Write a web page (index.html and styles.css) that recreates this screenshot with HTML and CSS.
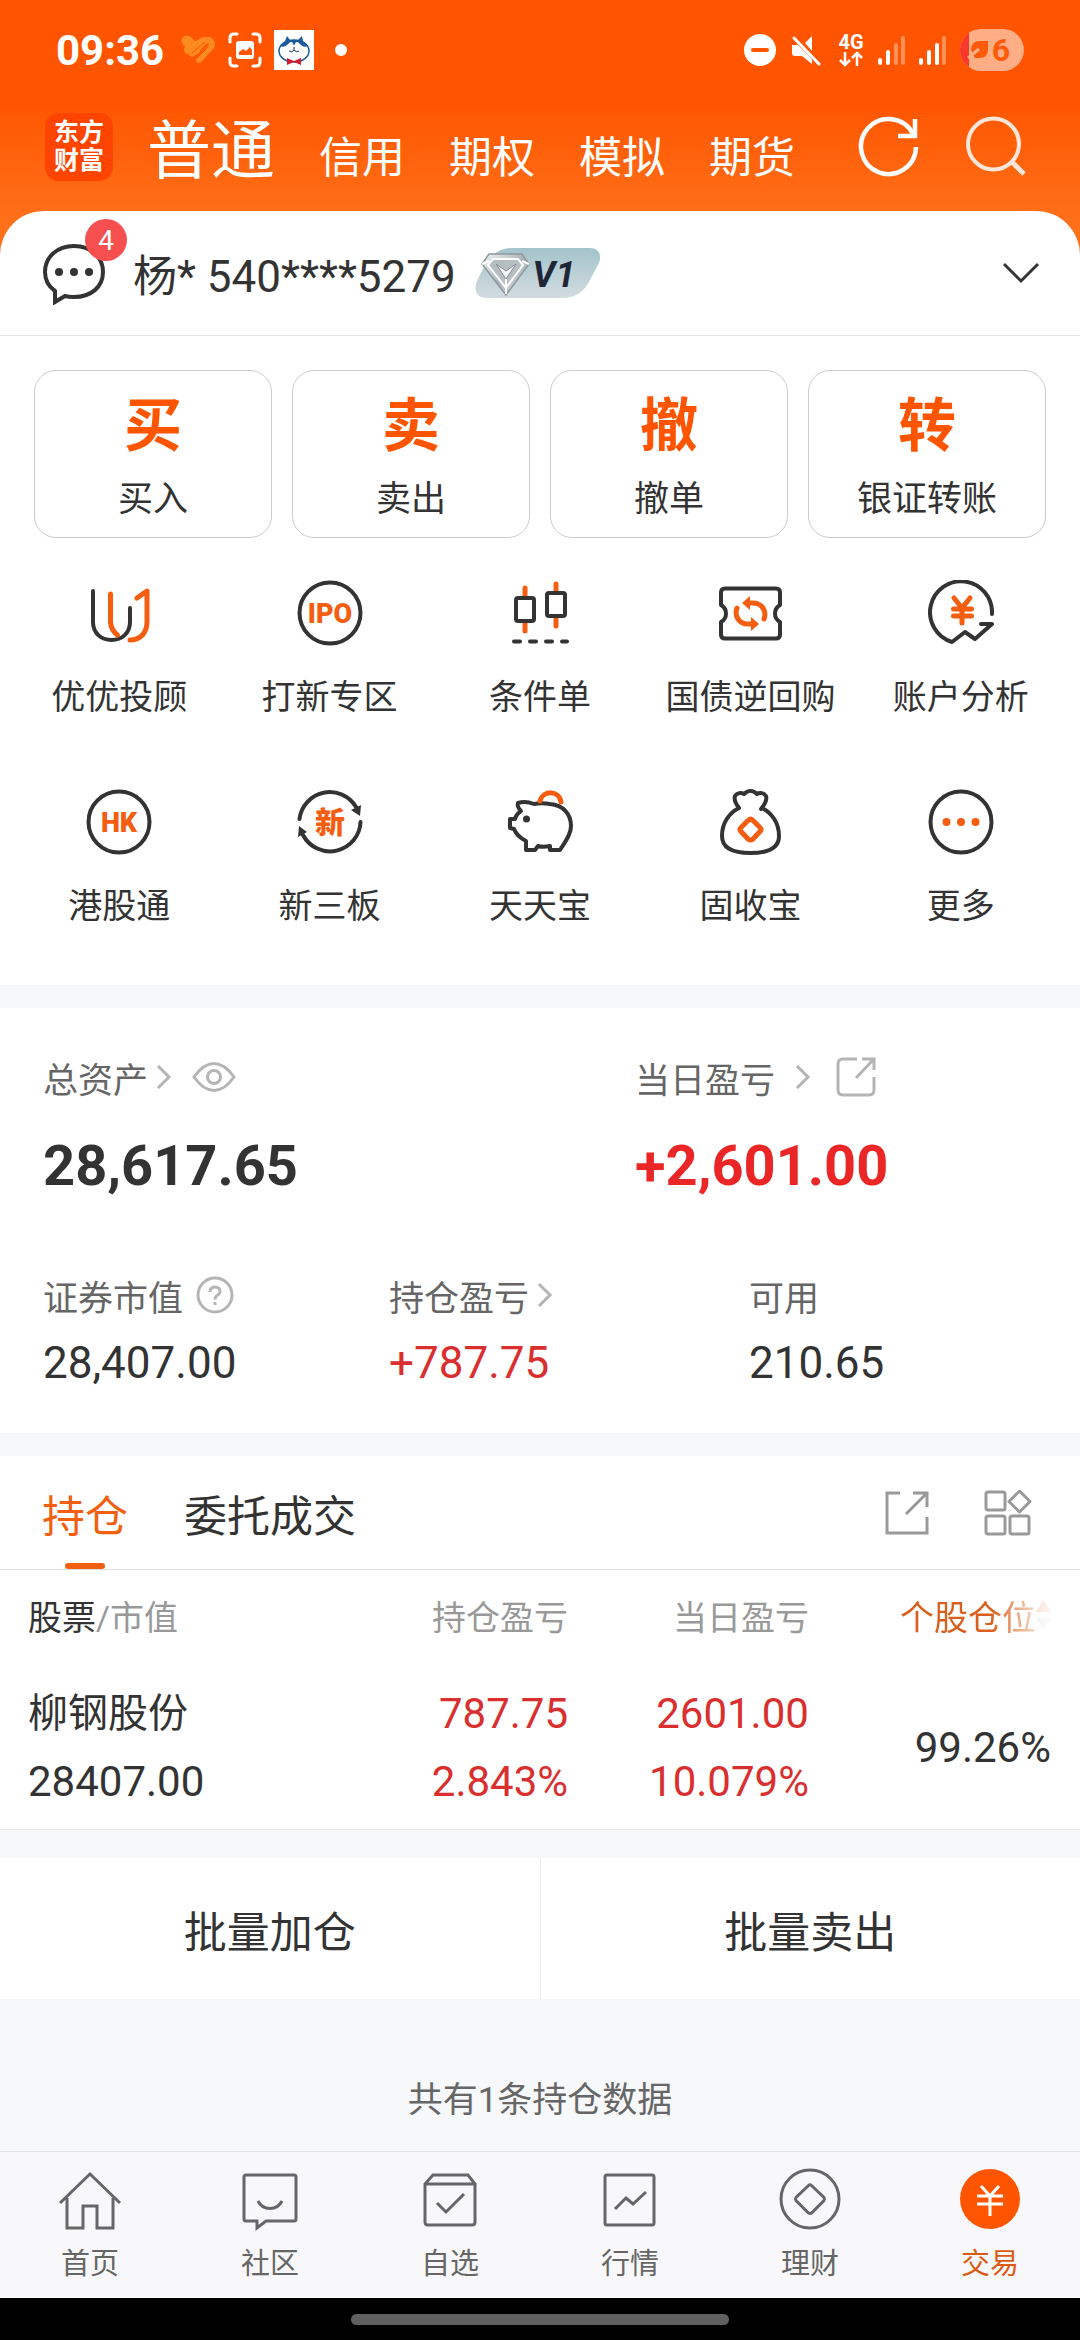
FILE: index.html
```html
<!DOCTYPE html>
<html lang="zh-CN">
<head>
  <meta charset="UTF-8">
  <meta name="viewport" content="width=device-width, initial-scale=1.0">
  <title>交易</title>
  <link rel="stylesheet" href="styles.css">
</head>
<body>

  <!-- 顶部 -->
  <div class="top">
    <div class="status-bar">
      <div class="status-left">
        <span class="time">09:36</span>
        <svg width="36" height="36" viewBox="0 0 36 36" fill="none" stroke="#ff8a1f" stroke-linecap="round">
          <path d="M7 9L15 17" stroke-width="11"/>
          <path d="M8 18L24 9" stroke-width="8"/>
          <path d="M12 22L25 9Q30 6 32 12Q32 15 29 17L19 28" stroke-width="6"/>
          <path d="M12 21L25 10M17 26L28 15" stroke="#ff5500" stroke-width="1"/>
        </svg>
        <svg width="34" height="36" viewBox="0 0 34 36" fill="none" stroke="#fff" stroke-width="3" stroke-linecap="round">
          <path d="M2 10V6Q2 2 6 2H9M25 2H28Q32 2 32 6V10M32 26V30Q32 34 28 34H25M9 34H6Q2 34 2 30V26"/>
          <rect x="8" y="9" width="18" height="18" rx="3" fill="#fff" stroke="none"/>
          <path d="M11 23V20L15 17L18 19L22 15L24 18V23Z" fill="#ff5500" stroke="none"/>
        </svg>
        <svg width="40" height="40" viewBox="0 0 40 40">
          <rect width="40" height="40" fill="#fff"/>
          <ellipse cx="20" cy="21" rx="15" ry="11" fill="#fff" stroke="#1d5a9c" stroke-width="1.5"/>
          <path d="M6 16L11 11L13 6L16 10H24L28 6L29 11L34 16Q30 18 27 15Q24 11 20 15Q16 11 13 15Q10 18 6 16Z" fill="#1d5a9c"/>
          <circle cx="17" cy="14" r="2" fill="#fff"/><circle cx="23" cy="14" r="2" fill="#fff"/>
          <path d="M15 21Q18 23 20 20Q22 23 25 21M20 17V20" fill="none" stroke="#1d3a5c"/>
          <path d="M13 28L20 31L27 28V35L20 32L13 35Z" fill="#d11a2d"/>
        </svg>
        <span class="dot"></span>
      </div>
      <div class="status-right">
        <svg width="32" height="32" viewBox="0 0 32 32">
          <circle cx="16" cy="16" r="16" fill="#fff"/>
          <path d="M9 16H23" stroke="#ff5500" stroke-width="4" stroke-linecap="round"/>
        </svg>
        <svg width="34" height="32" viewBox="0 0 34 32" fill="#fff">
          <path d="M2 11H8L22 25V30L12 22H5Q2 22 2 19Z"/>
          <path d="M15 9L22 2V17Z"/>
          <path d="M4 4L29 30" stroke="#fff" stroke-width="3" stroke-linecap="round"/>
        </svg>
        <svg width="26" height="42" viewBox="0 0 26 42">
          <text class="net" x="13" y="20" text-anchor="middle">4G</text>
          <path d="M7 23V36M2 31L7 36L12 31M19 37V24M14 29L19 24L24 29" fill="none" stroke="#fff" stroke-width="2.5"/>
        </svg>
        <svg width="27" height="32" viewBox="0 0 27 32" stroke="#fff" stroke-width="4" stroke-linecap="round">
          <path d="M2 26V29M10 18V29"/>
          <path d="M18 11V29M25 4V29" opacity=".35"/>
        </svg>
        <svg width="27" height="32" viewBox="0 0 27 32" stroke="#fff" stroke-width="4" stroke-linecap="round">
          <path d="M2 26V29M10 18V29M18 11V29"/>
          <path d="M25 4V29" opacity=".35"/>
        </svg>
        <svg width="64" height="42" viewBox="0 0 64 42">
          <clipPath id="pill"><rect width="64" height="42" rx="21"/></clipPath>
          <g clip-path="url(#pill)">
            <rect width="64" height="42" fill="#ffad85"/>
            <rect width="9" height="42" fill="#f8382a"/>
          </g>
          <path d="M11 21Q11 12 20 12H28V20Q28 29 20 29H15Z" fill="#ff5a0a"/>
          <path d="M8 29L19 20" stroke="#ffad85" stroke-width="3"/>
          <text class="battery" x="41" y="32" text-anchor="middle">6</text>
        </svg>
      </div>
    </div>

    <header class="header">
      <div class="logo">东方<br>财富</div>
      <nav class="header-tabs">
        <a class="active" href="#">普通</a>
        <a href="#">信用</a>
        <a href="#">期权</a>
        <a href="#">模拟</a>
        <a href="#">期货</a>
      </nav>
      <div class="header-buttons">
        <button type="button" aria-label="刷新">
          <svg width="64" height="64" viewBox="0 0 64 64" fill="none" stroke="#fff" stroke-width="4.5">
            <path d="M59 32A27.5 27.5 0 1 1 56 19"/>
            <path d="M58 4V21H41"/>
          </svg>
        </button>
        <button type="button" aria-label="搜索">
          <svg width="64" height="64" viewBox="0 0 64 64" fill="none" stroke="#ffe6d8" stroke-width="4">
            <circle cx="29.5" cy="29" r="25.5"/>
            <path d="M47 46L60 59" stroke-width="5"/>
          </svg>
        </button>
      </div>
    </header>

    <div class="account">
      <button type="button" class="message" aria-label="消息">
        <svg width="64" height="64" viewBox="0 0 64 64" fill="none" stroke="#333" stroke-width="4">
          <path d="M13 50C6 45 3 38 3 31C3 16 15 5 32 5S61 16 61 31S49 56 32 56C28 56 26 56 23 55L13 61Z"/>
          <g fill="#333" stroke="none"><circle cx="17" cy="31" r="4"/><circle cx="32" cy="31" r="4"/><circle cx="47" cy="31" r="4"/></g>
        </svg>
        <span class="badge">4</span>
      </button>
      <span class="account-name">杨* 540****5279</span>
      <svg width="128" height="52" viewBox="0 0 128 52">
        <defs>
          <linearGradient id="level" x1="0" y1="0" x2="0" y2="1"><stop offset="0" stop-color="#a3c3cb"/><stop offset="1" stop-color="#d3dce0"/></linearGradient>
          <linearGradient id="gem" x1="0" y1="0" x2="1" y2="1"><stop offset="0" stop-color="#f4f6f7"/><stop offset=".5" stop-color="#a9b2b6"/><stop offset="1" stop-color="#e3e7e9"/></linearGradient>
        </defs>
        <path d="M38 1H116Q127 1 126 13Q125 16 116 33Q107 51 89 51H12Q-1 50 2 37Q4 31 10 20Q20 1 38 1Z" fill="url(#level)"/>
        <path d="M15 7H48L55 17L32 48L8 17Z" fill="url(#gem)" stroke="#8d979c" stroke-width="1.5"/>
        <path d="M19 12H44L49 18L32 41L14 18Z" fill="#b6bec2" stroke="#fff" stroke-width="2"/>
        <path d="M22 17L32 32L42 17L32 24Z" fill="#f7f9fa" stroke="#7f8a90" stroke-width="1"/>
        <path d="M8 17L15 14M55 17L48 14M32 32V47" stroke="#fff" stroke-width="2"/>
        <text class="level" x="80" y="40" text-anchor="middle">V1</text>
      </svg>
      <button type="button" class="expand" aria-label="展开">
        <svg width="36" height="24" viewBox="0 0 36 24" fill="none" stroke="#333" stroke-width="3">
          <path d="M1 3L18 20L35 3"/>
        </svg>
      </button>
    </div>
  </div>

  <!-- 交易入口 -->
  <div class="panel entry">
    <div class="trades">
      <button type="button"><b>买</b><span>买入</span></button>
      <button type="button"><b>卖</b><span>卖出</span></button>
      <button type="button"><b>撤</b><span>撤单</span></button>
      <button type="button"><b>转</b><span>银证转账</span></button>
    </div>

    <div class="services">
      <a href="#">
        <svg class="icon" viewBox="0 0 66 66">
          <path d="M7 11V42C7 53 15 60 25.5 60S44 53 44 42V28"/>
          <path class="hot" d="M24.5 14V42Q25 50 31.5 55M44 60C55 60 61 52 61 42V11L51 18"/>
        </svg>
        优优投顾
      </a>
      <a href="#">
        <svg class="icon" viewBox="0 0 66 66">
          <circle cx="33" cy="33" r="30.5"/>
          <text x="33" y="43" text-anchor="middle">IPO</text>
        </svg>
        打新专区
      </a>
      <a href="#">
        <svg class="icon" viewBox="0 0 66 66">
          <path class="hot" d="M18 8V17M18 43V51M49 4V12M49 39V46"/>
          <rect x="9" y="18" width="18" height="23" rx="2"/>
          <rect x="40" y="13" width="18" height="23" rx="2"/>
          <path d="M7 61.5H13M23 61.5H29M39 61.5H45M55 61.5H60"/>
        </svg>
        条件单
      </a>
      <a href="#">
        <svg class="icon" viewBox="0 0 66 66">
          <path d="M8 8.500H59Q63 8.500 63 12.500V25Q58 28 58 33.500T63 42V54.500Q63 58.500 59 58.500H8Q4 58.500 4 54.500V42Q9 39 9 33.500T4 25V12.500Q4 8.500 8 8.500Z"/>
          <path class="hot" d="M20 28C17 36 22 44 31 44H34M47 39C50 31 45 23 36 23H33"/>
          <path class="hot-fill" d="M34 37L42 44L34 51ZM33 16L25 23L33 30Z"/>
        </svg>
        国债逆回购
      </a>
      <a href="#">
        <svg class="icon" viewBox="0 0 66 66">
          <path d="M64 34A31 31 0 1 0 24 62L37 52L47 59L64 44H53"/>
          <path class="hot" d="M26 18L34 28L42 18M25.500 29H43.500M25.500 36H43.500M34 28V43"/>
        </svg>
        账户分析
      </a>
      <a href="#">
        <svg class="icon" viewBox="0 0 66 66">
          <circle cx="33" cy="33" r="30.5"/>
          <text x="33" y="43" text-anchor="middle">HK</text>
        </svg>
        港股通
      </a>
      <a href="#">
        <svg class="icon" viewBox="0 0 66 66">
          <path d="M2.500 30A30.500 30.500 0 0 1 59 18M63.500 33A30.500 30.500 0 0 1 6 46"/>
          <path class="dark-fill" d="M54 21L64 16L63 27ZM1 48L2 37L10 43Z"/>
          <text class="cjk" x="33" y="44" text-anchor="middle">新</text>
        </svg>
        新三板
      </a>
      <a href="#">
        <svg class="icon" viewBox="0 0 66 66">
          <path d="M11 14C17 12 22 13 27 15C33 14 37 14 43 15C56 16 64 25 64 37C64 46 58 53 53 61H43V57C38 58 34 58 31 57L28 61H19V52C13 49 9 45 7 40L3 39V30H8C9 26 11 24 14 22C11 19 10 17 11 14Z"/>
          <circle class="dark-fill" cx="19.5" cy="30" r="3.5"/>
          <path class="hot" d="M33 12C36 1 52 1 54 13"/>
        </svg>
        天天宝
      </a>
      <a href="#">
        <svg class="icon" viewBox="0 0 66 66">
          <path d="M22 19C12 24 5 34 5 47C5 59 15 64 33.500 64S62 59 62 47C62 34 55 24 45 19M22 19C18 14 17 10 18 7C20 4 24 3 27 5C31 1 36 1 40 5C43 3 47 4 49 7C50 10 49 14 44 20"/>
          <path class="hot" d="M31 31.500Q33.500 29 36 31.500L43 38.500Q45 40.500 43 42.500L36 50Q33.500 52 31 50L24 42.500Q22 40.500 24 38.500Z"/>
        </svg>
        固收宝
      </a>
      <a href="#">
        <svg class="icon" viewBox="0 0 66 66">
          <circle cx="33" cy="33" r="30.5"/>
          <circle class="hot-fill" cx="18.5" cy="33" r="4"/>
          <circle class="hot-fill" cx="33" cy="33" r="4"/>
          <circle class="hot-fill" cx="47.5" cy="33" r="4"/>
        </svg>
        更多
      </a>
    </div>
  </div>

  <!-- 资产 -->
  <div class="panel assets">
    <div class="assets-main">
      <div>
        <div class="asset-label">
          总资产
          <svg class="arrow" viewBox="0 0 16 26"><path d="M2 2L13 13L2 24"/></svg>
          <button type="button" class="eye" aria-label="隐藏资产">
            <svg width="44" height="32" viewBox="0 0 44 32">
              <path d="M2 16C9 6 15 2.500 22 2.500S35 6 42 16C35 26 29 29.500 22 29.500S9 26 2 16Z"/>
              <circle cx="22" cy="16" r="6.500"/>
            </svg>
          </button>
        </div>
        <div class="asset-total">28,617.65</div>
      </div>
      <div>
        <div class="asset-label wide">
          当日盈亏
          <svg class="arrow" viewBox="0 0 16 26"><path d="M2 2L13 13L2 24"/></svg>
          <button type="button" aria-label="分享盈亏">
            <svg width="40" height="40" viewBox="0 0 40 40">
              <path d="M21 2H7Q2 2 2 7V33Q2 38 7 38H33Q38 38 38 33V20M26 2H38V13M38 2L20 21"/>
            </svg>
          </button>
        </div>
        <div class="asset-total up">+2,601.00</div>
      </div>
    </div>
    <div class="assets-sub">
      <div>
        <div class="asset-label">
          证券市值
          <button type="button" aria-label="说明">
            <svg width="38" height="38" viewBox="0 0 38 38">
              <circle cx="19" cy="19" r="17"/>
              <path d="M14 16Q14 11 19 11T24 15.500Q24 18 21 19.500Q19 21 19 23.500M19 26V29"/>
            </svg>
          </button>
        </div>
        <div class="asset-value">28,407.00</div>
      </div>
      <div>
        <div class="asset-label">
          持仓盈亏
          <svg class="arrow" viewBox="0 0 16 26"><path d="M2 2L13 13L2 24"/></svg>
        </div>
        <div class="asset-value up">+787.75</div>
      </div>
      <div>
        <div class="asset-label">可用</div>
        <div class="asset-value">210.65</div>
      </div>
    </div>
  </div>

  <!-- 持仓 -->
  <div class="panel positions">
    <div class="position-tabs">
      <a class="active" href="#">持仓</a>
      <a href="#">委托成交</a>
      <div class="position-buttons">
        <button type="button" aria-label="分享持仓">
          <svg width="44" height="44" viewBox="0 0 44 44">
            <path d="M15 2H2V42H42V26M28 2H42V16M42 2L21 23"/>
          </svg>
        </button>
        <button type="button" aria-label="布局">
          <svg width="48" height="46" viewBox="0 0 48 46">
            <rect x="2" y="2" width="19" height="18" rx="2"/>
            <rect x="2" y="26" width="19" height="18" rx="2"/>
            <rect x="26" y="26" width="19" height="18" rx="2"/>
            <path d="M35.500 1L46 11.500L35.500 22L25 11.500Z" stroke-linejoin="round"/>
          </svg>
        </button>
      </div>
    </div>

    <table>
      <thead>
        <tr>
          <th class="stock"><b>股票</b>/市值</th>
          <th class="profit">持仓盈亏</th>
          <th class="today">当日盈亏</th>
          <th class="share">
            <button type="button" class="sort">个股仓位<svg width="15" height="32" viewBox="0 0 15 32"><path d="M7.500 1L15 13H0Z" fill="#e8601c"/><path d="M7.500 31L15 19H0Z" fill="#bbb"/></svg></button>
          </th>
        </tr>
      </thead>
      <tbody>
        <tr>
          <td><span class="stock-name">柳钢股份</span><span>28407.00</span></td>
          <td class="up"><span>787.75</span><span>2.843%</span></td>
          <td class="up"><span>2601.00</span><span>10.079%</span></td>
          <td>99.26%</td>
        </tr>
      </tbody>
    </table>
  </div>

  <div class="batch">
    <button type="button">批量加仓</button>
    <button type="button">批量卖出</button>
  </div>

  <p class="summary">共有1条持仓数据</p>

  <!-- 底部导航 -->
  <nav class="tab-bar">
    <a href="#">
      <svg viewBox="0 0 68 68">
        <path d="M4 38L34 9L64 38M11 33V63H27V41H41V63H57V33"/>
      </svg>
      首页
    </a>
    <a href="#">
      <svg viewBox="0 0 68 68">
        <path d="M10 10H58Q60 10 60 12V54Q60 56 58 56H30L21 63V56H10Q8 56 8 54V12Q8 10 10 10Z"/>
        <path d="M22 36C27 46 41 46 46 36"/>
      </svg>
      社区
    </a>
    <a href="#">
      <svg viewBox="0 0 68 68">
        <path d="M9 19L17 10H52L59 19V57Q59 60 56 60H12Q9 60 9 57ZM9 19H59M21 38L30 47L48 29"/>
      </svg>
      自选
    </a>
    <a href="#">
      <svg viewBox="0 0 68 68">
        <rect x="9" y="10" width="49" height="50" rx="2"/>
        <path d="M19 44L30 33L37 39L50 27"/>
      </svg>
      行情
    </a>
    <a href="#">
      <svg viewBox="0 0 68 68">
        <circle cx="34" cy="34" r="29"/>
        <path d="M32.500 20.500Q34 19 35.500 20.500L48 32.500Q49 34 48 35.500L35.500 48Q34 49 32.500 48L20 35.500Q19 34 20 32.500Z"/>
      </svg>
      理财
    </a>
    <a class="active" href="#">
      <svg viewBox="0 0 68 68">
        <circle cx="34" cy="34" r="30"/>
        <path d="M25 21L34 31L43 21M21 31H47M21 39H47M34 31V51"/>
      </svg>
      交易
    </a>
  </nav>
  <div class="system-bar"><span></span></div>

</body>
</html>
```
FILE: styles.css
```css
/* 全体 */
* {
  box-sizing: border-box;
}

body {
  font-family: Roboto, "Noto Sans CJK SC", sans-serif;
  background-color: #f7f8fa;
  color: #333;
  margin: 0;
  min-height: 100vh;
  display: flex;
  flex-direction: column;
}

a {
  color: inherit;
  text-decoration: none;
}

button {
  font-family: inherit;
  color: inherit;
  background: none;
  border: none;
  padding: 0;
}

svg {
  display: block;
  flex: none;
}

/* 顶部 */
.top {
  background: linear-gradient(#ff5500 100px, #ff7019 220px);
}

.status-bar {
  height: 100px;
  padding: 0 56px;
  display: flex;
  justify-content: space-between;
  align-items: center;
  color: white;
}

.status-left {
  display: flex;
  align-items: center;
  gap: 12px;
}

.status-right {
  display: flex;
  align-items: center;
  gap: 14px;
}

.time {
  font-size: 42px;
  font-weight: bold;
  margin-right: 4px;
}

.dot {
  width: 12px;
  height: 12px;
  border-radius: 50%;
  background: white;
  margin-left: 9px;
}

.net {
  font-size: 20px;
  font-weight: bold;
  fill: white;
}

.battery {
  font-size: 32px;
  font-weight: bold;
  fill: #ff5a0a;
}

.header {
  height: 111px;
  padding: 0 52px 17px 45px;
  display: flex;
  align-items: center;
  color: white;
}

.logo {
  width: 68px;
  height: 68px;
  border-radius: 14px;
  background: #ff4400;
  font-size: 25px;
  font-weight: bold;
  line-height: 28px;
  padding-top: 6px;
  text-align: center;
}

.header-tabs {
  display: flex;
  align-items: baseline;
  gap: 44px;
  margin-left: 34px;
  padding-top: 16px;
  font-size: 43px;
  line-height: 80px;
}

.header-tabs .active {
  font-size: 64px;
}

.header-buttons {
  display: flex;
  gap: 43px;
  margin-left: auto;
}

/* 账户 */
.account {
  height: 125px;
  padding: 0 41px 0 42px;
  display: flex;
  align-items: center;
  background: white;
  border-bottom: 1px solid #e2e2e2;
  border-radius: 44px 44px 0 0;
}

.message {
  position: relative;
  margin-right: 27px;
}

.badge {
  position: absolute;
  top: -22px;
  right: -21px;
  width: 42px;
  height: 42px;
  border-radius: 50%;
  background: #f64f4f;
  color: white;
  font-size: 28px;
  line-height: 44px;
}

.account-name {
  font-size: 44px;
  line-height: 64px;
  padding-top: 8px;
  margin-right: 18px;
}

.level {
  font-size: 36px;
  font-style: italic;
  font-weight: bold;
  fill: #1f2638;
}

.expand {
  margin-left: auto;
}

.panel {
  background: white;
  margin-bottom: 23px;
}

/* 交易入口 */
.entry {
  padding: 34px 14px 55px;
}

.trades {
  display: grid;
  grid-template-columns: repeat(4, 1fr);
  gap: 20px;
  padding: 0 20px;
}

.trades button {
  height: 168px;
  padding-top: 2px;
  border: 1px solid #ccc;
  border-radius: 22px;
  display: flex;
  flex-direction: column;
  align-items: center;
  justify-content: center;
  gap: 10px;
  font-size: 35px;
  line-height: 48px;
}

.trades b {
  color: #ff5500;
  font-size: 58px;
  line-height: 80px;
}

.services {
  display: grid;
  grid-template-columns: repeat(5, 1fr);
  row-gap: 68px;
  padding-top: 42px;
}

.services a {
  display: flex;
  flex-direction: column;
  align-items: center;
  gap: 27px;
  font-size: 34px;
  line-height: 48px;
}

.icon {
  width: 66px;
  height: 66px;
  fill: none;
  stroke: #333;
  stroke-width: 4;
  stroke-linecap: round;
  stroke-linejoin: round;
}

.icon .hot {
  stroke: #f55d10;
  stroke-width: 5;
}

.icon .hot-fill {
  fill: #f55d10;
  stroke: none;
}

.icon .dark-fill {
  fill: #333;
  stroke: none;
}

.icon text {
  font-size: 27px;
  font-weight: 900;
  fill: #f55d10;
  stroke: none;
}

.icon .cjk {
  font-size: 30px;
}

/* 资产 */
.assets {
  padding: 45px 43px 38px;
}

.assets-main {
  display: grid;
  grid-template-columns: 592fr 402fr;
  margin-bottom: 73px;
}

.assets-sub {
  display: grid;
  grid-template-columns: 346fr 360fr 288fr;
}

.asset-label {
  display: flex;
  align-items: center;
  gap: 8px;
  height: 48px;
  font-size: 35px;
  color: #666;
}

.asset-label.wide {
  gap: 20px;
}

.asset-label svg {
  fill: none;
  stroke: #b5b5b5;
  stroke-width: 3;
}

.asset-label button {
  margin-left: 5px;
}

.asset-label .eye {
  margin-left: 12px;
}

.asset-label .arrow {
  width: 16px;
  height: 26px;
}

.asset-total {
  font-size: 56px;
  font-weight: bold;
  line-height: 64px;
  margin-top: 33px;
}

.asset-value {
  font-size: 44px;
  line-height: 64px;
  margin-top: 12px;
}

.up {
  color: #d92f2f;
}

.asset-total.up {
  color: #eb2626;
}

/* 持仓 */
.positions {
  border-bottom: 1px solid #e8e8e8;
  margin-bottom: 28px;
}

.position-tabs {
  height: 114px;
  padding: 0 48px 0 42px;
  display: flex;
  align-items: center;
  gap: 56px;
  border-bottom: 1px solid #ddd;
  font-size: 43px;
}

.position-tabs a {
  position: relative;
  padding-top: 10px;
  line-height: 103px;
}

.position-tabs .active {
  color: #f2600f;
}

.position-tabs .active::after {
  content: "";
  position: absolute;
  left: 50%;
  bottom: 0;
  width: 40px;
  height: 6px;
  margin-left: -20px;
  border-radius: 3px;
  background: #f2600f;
}

.position-buttons {
  display: flex;
  align-items: center;
  gap: 55px;
  margin-left: auto;
}

.position-buttons svg {
  fill: none;
  stroke: #999;
  stroke-width: 3;
}

table {
  width: 100%;
  table-layout: fixed;
  border-collapse: collapse;
  text-align: right;
}

th {
  height: 94px;
  padding: 0 0 4px;
  font-size: 34px;
  font-weight: normal;
  color: #999;
}

th b {
  font-weight: normal;
  color: #333;
}

.stock {
  width: 30%;
}

.profit {
  width: 22.6%;
}

.today {
  width: 22.3%;
}

th:first-child,
td:first-child {
  text-align: left;
  padding-left: 28px;
}

th:last-child,
td:last-child {
  padding-right: 29px;
}

.sort {
  display: inline-flex;
  align-items: center;
  font-size: 34px;
  color: #d9601c;
  vertical-align: middle;
  -webkit-mask-image: linear-gradient(to right, #000 60%, rgba(0, 0, 0, 0.1) 95%);
  mask-image: linear-gradient(to right, #000 60%, rgba(0, 0, 0, 0.1) 95%);
}

td {
  padding: 16px 0 13px;
  font-size: 42px;
  line-height: 68px;
}

td span {
  display: block;
}

.stock-name {
  font-size: 40px;
}

.batch {
  display: flex;
  background: white;
}

.batch button {
  flex: 1;
  height: 141px;
  font-size: 43px;
}

.batch button + button {
  border-left: 1px solid #eee;
}

.summary {
  flex: 1;
  margin: 0;
  padding: 78px 0 26px;
  font-size: 35px;
  line-height: 48px;
  text-align: center;
  color: #666;
}

/* 底部导航 */
.tab-bar {
  display: flex;
  background: #f8f8fa;
  border-top: 1px solid #e2e3e5;
  padding: 13px 0 14px;
}

.tab-bar a {
  flex: 1;
  display: flex;
  flex-direction: column;
  align-items: center;
  gap: 11px;
  font-size: 29px;
  line-height: 40px;
  color: #666;
}

.tab-bar svg {
  width: 68px;
  height: 68px;
  fill: none;
  stroke: #666;
  stroke-width: 3;
}

.tab-bar .active {
  color: #dc5a14;
}

.tab-bar .active svg {
  stroke: #fff;
}

.tab-bar .active circle {
  fill: #ff5500;
  stroke: none;
}

.system-bar {
  height: 42px;
  background: black;
  display: flex;
  justify-content: center;
  align-items: center;
}

.system-bar span {
  width: 35%;
  height: 11px;
  border-radius: 6px;
  background: #606060;
}
```
